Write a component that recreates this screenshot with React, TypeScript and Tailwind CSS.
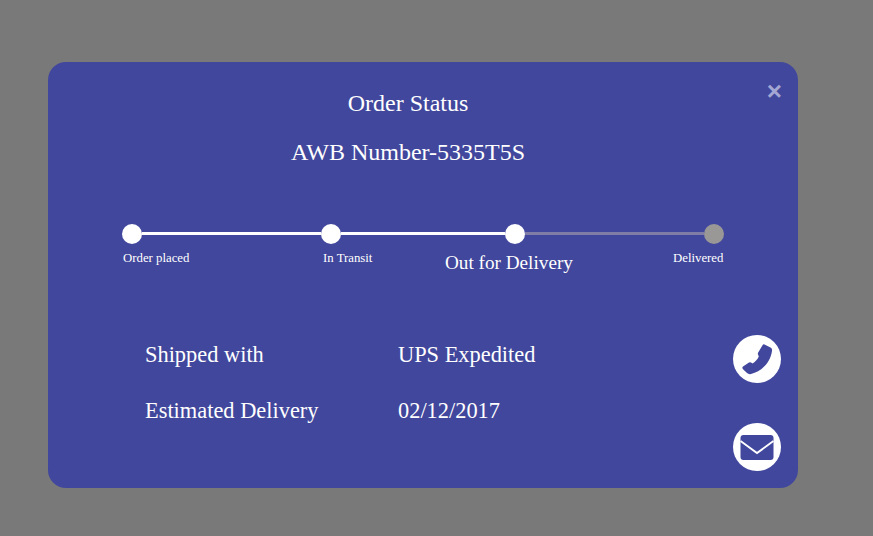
import React from 'react'

function Dot({ done }: { done: boolean }) {
  return <span className={done ? 'h-5 w-5 shrink-0 rounded-full bg-white' : 'h-5 w-5 shrink-0 rounded-full bg-[#9a9896]'} />
}

export default function App() {
  return (
    <div className="h-[536px] w-[873px] overflow-hidden bg-[#797979] pl-12 pt-[62px] font-['Liberation_Serif',serif] text-white">
      <div className="relative h-[426px] w-[750px] rounded-[18px] bg-[#41479c]">
        <button className="absolute right-[16px] top-[16px] text-[26px] font-bold leading-[26px] text-[#a4a7d4]" style={{ fontFamily: '"Liberation Sans", sans-serif' }}>
          ×
        </button>

        <div className="flex w-[720px] flex-col items-center pt-[27px]">
          <h1 className="text-[24px] leading-[28px]">Order Status</h1>
          <h2 className="mt-[21px] text-[24px] leading-[28px]">AWB Number-5335T5S</h2>
        </div>

        {/* Progress steps */}
        <div className="ml-[74px] mt-[58px] w-[602px]">
          <div className="flex items-start">
            <Dot done />
            <div className="mt-[8px] h-[3px] w-[179px] bg-white" />
            <Dot done />
            <div className="mt-[8px] h-[3px] w-[164px] bg-white" />
            <Dot done />
            <div className="mt-[8px] h-[3px] w-[179px] bg-[#7f7da6]" />
            <Dot done={false} />
          </div>
          <div className="flex items-start">
            <span className="ml-px mt-[6px] w-[200px] text-[12.8px] leading-[16px]">Order placed</span>
            <span className="mt-[6px] w-[122px] text-[12.8px] leading-[16px]">In Transit</span>
            <span className="mt-[8px] w-[228px] text-[19.2px] leading-[22px]">Out for Delivery</span>
            <span className="mt-[6px] text-[12.8px] leading-[16px]">Delivered</span>
          </div>
        </div>

        <div className="ml-[97px] mt-[61px] flex items-start justify-between pr-[17px]">
          <div className="grid grid-cols-[253px_1fr] gap-y-[28px] pt-[6px] text-[22.4px] leading-[28px]">
            <span>Shipped with</span>
            <span>UPS Expedited</span>
            <span>Estimated Delivery</span>
            <span>02/12/2017</span>
          </div>
          <div className="flex flex-col gap-10">
            <span className="flex h-12 w-12 items-center justify-center rounded-full bg-white text-[#41479c]">
              <svg width="31" height="31" viewBox="0 0 31 31" fill="currentColor" aria-hidden="true">
                <path d="M22.5 0.5 L28.5 3.5 Q30.5 4.5 30 7 C28.5 18 20 27.5 9 30 Q6.5 30.5 5 29 L0.8 25 Q-0.2 23.5 1 22.5 L7 18.5 Q8.5 17.8 9.5 18.8 L10.5 19.5 C13 18 15.5 15.5 16.8 12.5 L16 10.5 Q15.6 9.5 16.2 8.5 L20.5 1.2 Q21.3 0 22.5 0.5 Z" />
              </svg>
            </span>
            <span className="flex h-12 w-12 items-center justify-center rounded-full bg-white text-[#41479c]">
              <svg width="34" height="25" viewBox="0 0 34 25" aria-hidden="true">
                <rect x="0.5" y="0" width="33" height="25" rx="3" fill="currentColor" />
                <path d="M0.5 6 L17 18 L33.5 6" fill="none" stroke="#ffffff" strokeWidth="2" />
              </svg>
            </span>
          </div>
        </div>
      </div>
    </div>
  )
}
